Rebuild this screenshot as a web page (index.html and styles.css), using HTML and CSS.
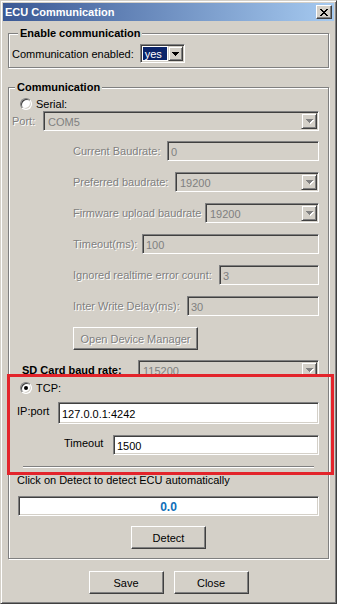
FILE: index.html
```html
<!DOCTYPE html>
<html lang="en">
<head>
    <meta charset="UTF-8">
    <meta name="viewport" content="width=device-width, initial-scale=1.0">
    <title>ECU Communication</title>
    <link rel="stylesheet" href="styles.css">
</head>
<body>

    <div class="window">
        <div class="titlebar">
            <span class="title">ECU Communication</span>
            <span class="close-btn">
                <!-- classic 8x7 close cross -->
                <svg width="8" height="7" viewBox="0 0 8 7"><path d="M0 0h2v1h1v1h2v-1h1v-1h2v1h-1v1h-1v1h-1v1h1v1h1v1h1v1h-2v-1h-1v-1h-2v1h-1v1h-2v-1h1v-1h1v-1h1v-1h-1v-1h-1v-1h-1z" fill="#000"/></svg>
            </span>
        </div>

        <div class="client">
            <fieldset class="group group-enable">
                <legend>Enable communication</legend>
                <div class="row">
                    <span class="label">Communication enabled:</span>
                    <div class="combo combo-yes">
                        <span class="combo-text selected">yes</span>
                        <span class="drop-btn">
                            <svg width="7" height="4" viewBox="0 0 7 4"><path d="M0 0H7V1H6V2H5V3H4V4H3V3H2V2H1V1H0Z" fill="#000"/></svg>
                        </span>
                    </div>
                </div>
            </fieldset>

            <fieldset class="group group-comm">
                <legend>Communication</legend>

                <div class="radio-row">
                    <span class="radio"></span>
                    <span>Serial:</span>
                </div>

                <div class="row row-port">
                    <span class="label disabled">Port:</span>
                    <div class="combo off w-port">
                        <span class="combo-text">COM5</span>
                        <span class="drop-btn"><svg width="8" height="5" viewBox="0 0 8 5"><path d="M1 1H8V2H7V3H6V4H5V5H4V4H3V3H2V2H1Z" fill="#fff"/><path d="M0 0H7V1H6V2H5V3H4V4H3V3H2V2H1V1H0Z" fill="#808080"/></svg></span>
                    </div>
                </div>

                <div class="row row-serial first">
                    <span class="label disabled">Current Baudrate:</span>
                    <div class="field off w-current">0</div>
                </div>

                <div class="row row-serial">
                    <span class="label disabled">Preferred baudrate:</span>
                    <div class="combo off w-preferred">
                        <span class="combo-text">19200</span>
                        <span class="drop-btn"><svg width="8" height="5" viewBox="0 0 8 5"><path d="M1 1H8V2H7V3H6V4H5V5H4V4H3V3H2V2H1Z" fill="#fff"/><path d="M0 0H7V1H6V2H5V3H4V4H3V3H2V2H1V1H0Z" fill="#808080"/></svg></span>
                    </div>
                </div>

                <div class="row row-serial">
                    <span class="label disabled">Firmware upload baudrate</span>
                    <div class="combo off w-firmware">
                        <span class="combo-text">19200</span>
                        <span class="drop-btn"><svg width="8" height="5" viewBox="0 0 8 5"><path d="M1 1H8V2H7V3H6V4H5V5H4V4H3V3H2V2H1Z" fill="#fff"/><path d="M0 0H7V1H6V2H5V3H4V4H3V3H2V2H1V1H0Z" fill="#808080"/></svg></span>
                    </div>
                </div>

                <div class="row row-serial">
                    <span class="label disabled">Timeout(ms):</span>
                    <div class="field off w-timeout">100</div>
                </div>

                <div class="row row-serial">
                    <span class="label disabled">Ignored realtime error count:</span>
                    <div class="field off w-ignored">3</div>
                </div>

                <div class="row row-serial">
                    <span class="label disabled">Inter Write Delay(ms):</span>
                    <div class="field off w-inter">30</div>
                </div>

                <button class="btn btn-devmgr" disabled>Open Device Manager</button>

                <div class="row row-sd">
                    <span class="label sd-label">SD Card baud rate:</span>
                    <div class="combo off w-sd">
                        <span class="combo-text">115200</span>
                        <span class="drop-btn"><svg width="8" height="5" viewBox="0 0 8 5"><path d="M1 1H8V2H7V3H6V4H5V5H4V4H3V3H2V2H1Z" fill="#fff"/><path d="M0 0H7V1H6V2H5V3H4V4H3V3H2V2H1V1H0Z" fill="#808080"/></svg></span>
                    </div>
                </div>

                <!-- TCP settings -->
                <div class="radio-row tcp-radio">
                    <span class="radio checked"></span>
                    <span>TCP:</span>
                </div>

                <div class="row row-tcp row-ip">
                    <span class="label">IP:port</span>
                    <div class="field w-ip">127.0.0.1:4242</div>
                </div>

                <div class="row row-tcp row-tcp-timeout">
                    <span class="label">Timeout</span>
                    <div class="field w-tcp-timeout">1500</div>
                </div>

                <div class="separator"></div>

                <p class="hint">Click on Detect to detect ECU automatically</p>

                <div class="field value-box">0.0</div>

                <div class="btn-row">
                    <button class="btn">Detect</button>
                </div>
            </fieldset>

            <div class="footer">
                <button class="btn">Save</button>
                <button class="btn">Close</button>
            </div>
        </div>

        <div class="highlight"></div> <!-- red marker round the TCP block -->
    </div>

</body>
</html>
```

FILE: styles.css
```css
/* General */
* {
    box-sizing: border-box;
}

body {
    margin: 0;
    font-family: 'Liberation Sans', Arial, sans-serif;
    font-size: 11px;
    color: #000;
    background-color: #d4d0c8;
}

/* Window frame */
.window {
    position: relative;
    width: 337px;
    height: 604px;
    padding: 2px;
    display: flex;
    flex-direction: column;
    background-color: #d4d0c8;
    border: 1px solid;
    border-color: #d4d0c8 #404040 #404040 #d4d0c8;
    box-shadow: inset 1px 1px 0 #fff, inset -1px -1px 0 #808080;
}

.titlebar {
    height: 18px;
    display: flex;
    align-items: center;
    padding: 0 2px 0 2px;
    background: linear-gradient(90deg, #3a5894 0%, #a6caf0 100%);
}

.title {
    flex: 1;
    color: #fff;
    font-weight: bold;
}

.close-btn {
    width: 16px;
    height: 14px;
    display: flex;
    align-items: center;
    justify-content: center;
    background-color: #d4d0c8;
    border: 1px solid;
    border-color: #fff #404040 #404040 #fff;
    box-shadow: inset -1px -1px 0 #808080;
}

.close-btn svg {
    display: block;
}

.client {
    flex: 1;
    padding: 6px 5px 0 5px;
}

/* Group boxes */
.group {
    margin: 0;
    padding: 0;
    min-width: 0;
    border: 1px solid #808080;
    box-shadow: 1px 1px 0 #fff, inset 1px 1px 0 #fff;
}

.group legend {
    margin-left: 6px;
    padding: 0 2px;
    line-height: 13px;
    font-weight: bold;
    background-color: #d4d0c8;
}

.group-enable {
    padding: 4px 0 4px 3px;
}

.group-comm {
    margin-top: 13px;
    padding: 0 9px 9px 0;
}

/* Rows */
.row {
    display: flex;
    align-items: center;
}

.label {
    flex: 1;
    white-space: nowrap;
}

.group-enable .label {
    flex: 0 0 auto;
    margin-right: 6px;
}

.disabled {
    color: #808080;
    text-shadow: 1px 1px 0 #fff;
}

/* Sunken fields */
.field,
.combo {
    height: 20px;
    display: flex;
    align-items: center;
    background-color: #fff;
    border: 1px solid;
    border-color: #808080 #fff #fff #808080;
    box-shadow: inset 1px 1px 0 #404040, inset -1px -1px 0 #d4d0c8;
}

.field {
    padding: 2px 3px 0 3px;
}

.field.off,
.combo.off {
    background-color: #d4d0c8;
    color: #808080;
}

.combo {
    padding: 1px;
}

.combo-text {
    flex: 1;
    padding: 2px 0 0 3px;
    align-self: stretch;
    display: flex;
    align-items: center;
}

.combo-text.selected {
    margin: 1px;
    padding: 1px 0 0 2px;
    background-color: #0a246a;
    color: #fff;
}

.drop-btn {
    width: 16px;
    align-self: stretch;
    display: flex;
    align-items: center;
    justify-content: center;
    padding-left: 1px;
    background-color: #d4d0c8;
    border: 1px solid;
    border-color: #d4d0c8 #404040 #404040 #d4d0c8;
    box-shadow: inset 1px 1px 0 #fff, inset -1px -1px 0 #808080;
}

.drop-btn svg {
    display: block;
}

.combo-yes {
    width: 45px;
    height: 19px;
}

.combo-yes .drop-btn {
    width: 15px;
}

/* widths of the fields, right edges line up */
.w-port { width: 276px; }
.w-current { width: 152px; }
.w-preferred { width: 144px; }
.w-firmware { width: 114px; }
.w-timeout { width: 177px; }
.w-ignored { width: 100px; }
.w-inter { width: 132px; }
.w-sd { width: 181px; }
.w-ip { width: 261px; height: 22px; }
.w-tcp-timeout { width: 206px; }

/* Radio buttons */
.radio-row {
    height: 14px;
    margin-top: 3px;
    padding-left: 11px;
    display: flex;
    align-items: center;
    gap: 4px;
}

.radio {
    position: relative;
    width: 12px;
    height: 12px;
    border-radius: 50%;
    background-color: #fff;
    border: 1px solid;
    border-color: #808080 #fff #fff #808080;
    box-shadow: inset 1px 1px 0 #404040, inset -1px -1px 0 #d4d0c8;
}

.radio.checked::after {
    content: "";
    position: absolute;
    left: 3px;
    top: 3px;
    width: 4px;
    height: 4px;
    border-radius: 50%;
    background-color: #000;
}

.row-port {
    padding-left: 3px;
}

.row-serial {
    margin-top: 11px;
    padding-left: 64px;
}

.row-serial.first {
    margin-top: 10px;
}

/* Buttons */
.btn {
    height: 23px;
    width: 75px;
    padding: 0;
    font: inherit;
    color: #000;
    background-color: #d4d0c8;
    border: 1px solid;
    border-color: #fff #404040 #404040 #fff;
    box-shadow: inset -1px -1px 0 #808080;
}

.btn:disabled {
    color: #808080;
    text-shadow: 1px 1px 0 #fff;
}

.btn-devmgr {
    display: block;
    width: 125px;
    margin: 11px 0 0 64px;
}

.row-sd {
    height: 17px;
    margin-top: 10px;
    padding-left: 13px;
    align-items: flex-start;
    overflow: hidden;
}

.sd-label {
    font-weight: bold;
    line-height: 20px;
}

.row-sd .combo {
    flex-shrink: 0;
}

/* TCP block */
.tcp-radio {
    margin-top: 4px;
}

.row-tcp {
    align-items: flex-start;
}

.row-ip {
    margin-top: 7px;
    padding-left: 8px;
}

.row-ip .label {
    padding-top: 3px;
}

.row-tcp-timeout {
    margin-top: 11px;
    padding-left: 55px;
}

.row-tcp-timeout .label {
    padding-top: 2px;
}

.field:not(.off) {
    color: #000;
}

.separator {
    height: 2px;
    margin: 11px 5px 0 14px;
    border-top: 1px solid #808080;
    border-bottom: 1px solid #fff;
}

.hint {
    margin: 6px 0 0 0;
    padding-left: 8px;
    line-height: 13px;
}

.value-box {
    margin: 9px 0 0 9px;
    justify-content: center;
    font-size: 12px;
    font-weight: bold;
}

.value-box:not(.off) {
    color: #0e6eb8;
}

.btn-row {
    margin-top: 10px;
    display: flex;
    justify-content: center;
    padding-left: 9px;
}

.footer {
    margin-top: 12px;
    display: flex;
    justify-content: center;
    gap: 10px;
}

/* Red marker over the TCP section */
.highlight {
    position: absolute;
    left: 6px;
    top: 373px;
    width: 327px;
    height: 101px;
    border: 3px solid #e3242b;
    pointer-events: none;
}
```
